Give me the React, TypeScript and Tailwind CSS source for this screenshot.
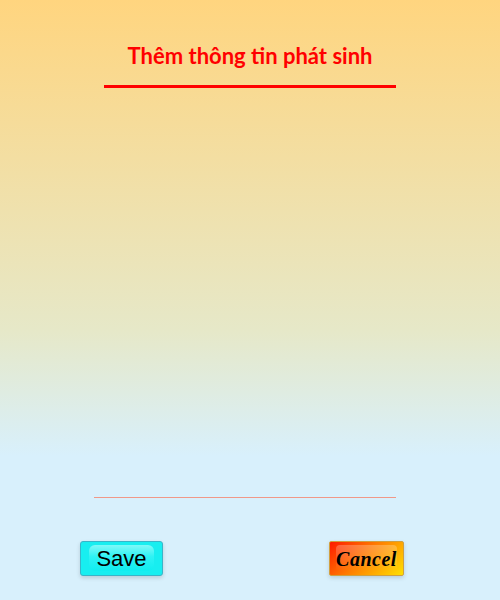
export default function App() {
  return (
    <div className="flex h-[600px] w-[500px] flex-col bg-[linear-gradient(to_bottom,#ffd57f_0%,#e6e8c8_55%,#d8f0fc_76%,#d8f0fc_100%)]">
      <h1 className="pt-[42px] text-center text-[22px] font-bold leading-[28px] text-[#ff0000] [font-family:Lato,'Open_Sans',sans-serif]">
        Thêm thông tin phát sinh
      </h1>
      <div className="ml-[104px] mt-[15px] h-[3px] w-[292px] bg-[#ff0000]" />
      <div className="flex-1" />
      <hr className="ml-[94px] h-px w-[302px] border-0 bg-[#f09888]" />
      <div className="flex justify-between pb-[24px] pl-[80px] pr-[96px] pt-[43px]">
        <button className="relative flex h-[35px] w-[83px] items-center justify-center rounded-[3px] border border-[#3ab4c8] bg-[#18eef0] shadow-[0_2px_4px_rgba(0,0,0,0.15)]">
          <span className="absolute inset-x-[8px] top-[3px] bottom-[4px] rounded-[6px] bg-[linear-gradient(to_bottom,#7ff8f8,#2ef2f4_45%,#10eef0)]" />
          <span className="relative text-[22px] leading-none text-black [font-family:'Liberation_Sans',Arial,sans-serif]">
            Save
          </span>
        </button>
        <button className="relative flex h-[35px] w-[75px] items-center justify-center rounded-[2px] border border-[#d0a040] bg-[linear-gradient(135deg,#ff1a00_0%,#ff7a00_45%,#ffe000_100%)] shadow-[0_2px_4px_rgba(0,0,0,0.15)]">
          <span className="absolute inset-x-[6px] top-[3px] bottom-[4px] rounded-[4px] bg-[linear-gradient(to_bottom,rgba(255,255,255,0.25),rgba(255,255,255,0))]" />
          <span className="relative text-[20px] font-bold italic leading-none tracking-[0.5px] text-black [font-family:'Liberation_Serif','Times_New_Roman',serif]">
            Cancel
          </span>
        </button>
      </div>
    </div>
  )
}
